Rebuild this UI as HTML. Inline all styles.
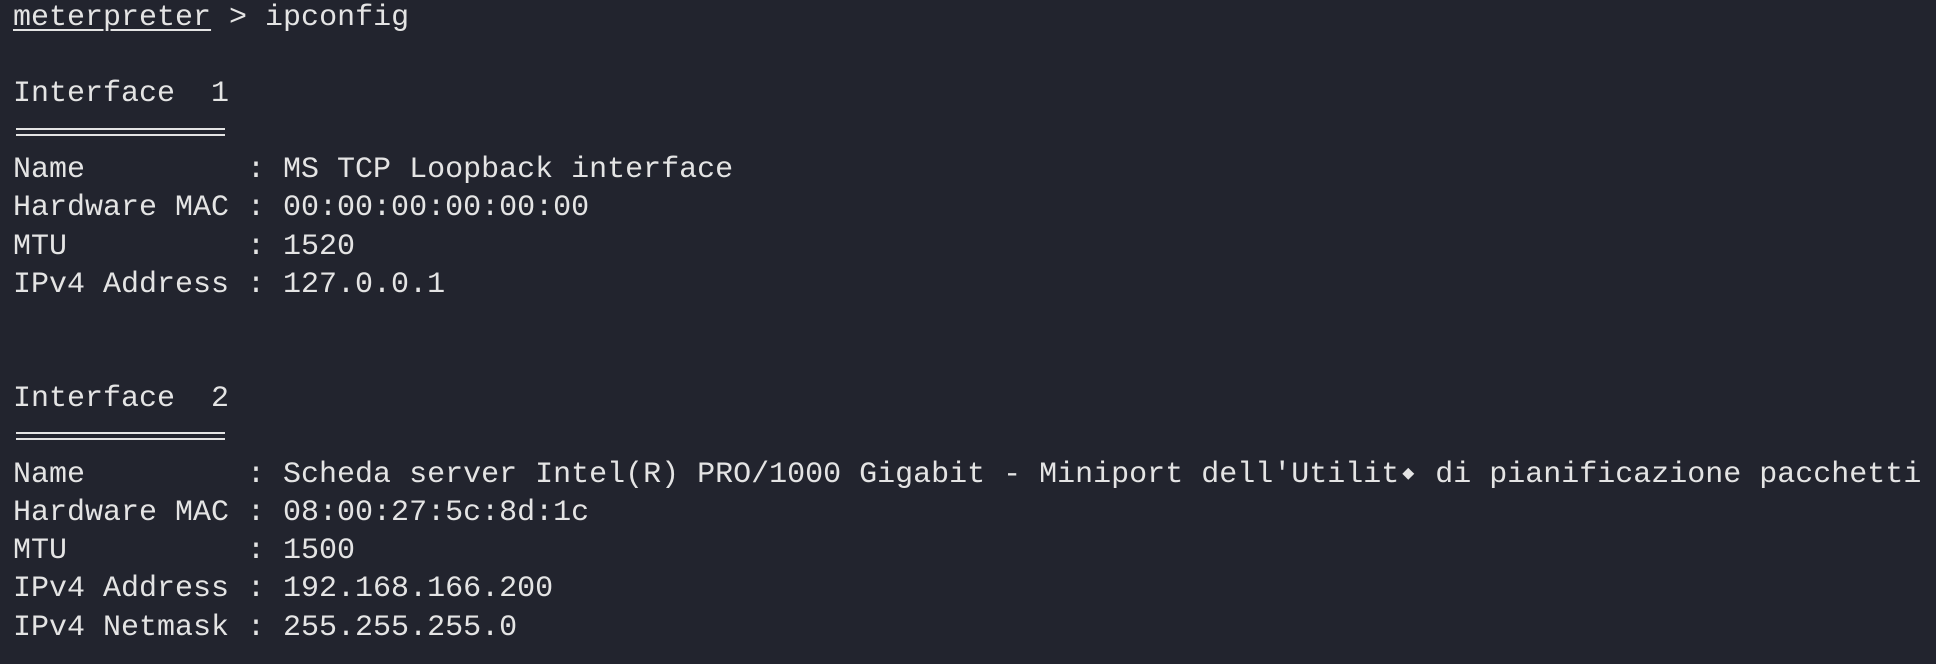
<!DOCTYPE html>
<html><head><meta charset="utf-8"><style>
html,body{margin:0;padding:0;background:#22242e;width:1936px;height:664px;overflow:hidden}
pre{margin:0;position:absolute;left:13px;top:-1px;font-family:"Liberation Mono",monospace;font-size:30px;line-height:38.1px;color:#e4e4e4;white-space:pre}
.u{text-decoration:underline;text-underline-offset:4px;text-decoration-thickness:2px}
.q{display:inline-block;width:18px;font-size:20px;text-align:center;vertical-align:top}
.dl{position:absolute;left:16px;width:209px;height:2px;background:#e4e4e4}
</style></head><body>
<pre><span class="u">meterpreter</span> &gt; ipconfig

Interface  1

Name         : MS TCP Loopback interface
Hardware MAC : 00:00:00:00:00:00
MTU          : 1520
IPv4 Address : 127.0.0.1


Interface  2

Name         : Scheda server Intel(R) PRO/1000 Gigabit - Miniport dell'Utilit<span class="q">◆</span> di pianificazione pacchetti
Hardware MAC : 08:00:27:5c:8d:1c
MTU          : 1500
IPv4 Address : 192.168.166.200
IPv4 Netmask : 255.255.255.0</pre>
<div class="dl" style="top:128px"></div>
<div class="dl" style="top:134px"></div>
<div class="dl" style="top:432px"></div>
<div class="dl" style="top:438px"></div>
</body></html>
